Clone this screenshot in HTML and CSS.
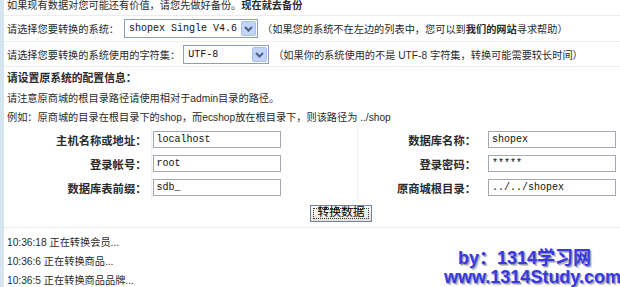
FILE: index.html
```html
<!DOCTYPE html>
<html lang="zh-CN">
<head>
<meta charset="utf-8">
<title>数据转换</title>
<link rel="stylesheet" href="styles.css">
</head>
<body>
<div class="page">
  <div class="row row-top">如果现有数据对您可能还有价值，请您先做好备份。<b>现在就去备份</b></div>
  <div class="row">
    <span>请选择您要转换的系统：</span>
    <span class="select sel-system"><span class="sel-text">shopex Single V4.6</span><span class="sel-btn"><svg width="15" height="15" viewBox="0 0 15 15"><rect x="0.5" y="0.5" width="14" height="14" rx="1.5" fill="#c3d4fa" stroke="#a9bff0"/><path d="M4 6 L7.5 9.5 L11 6" fill="none" stroke="#4d6185" stroke-width="2"/></svg></span></span>
    <span class="note">（如果您的系统不在左边的列表中，您可以到<b>我们的网站</b>寻求帮助）</span>
  </div>
  <div class="row row-3">
    <span>请选择您要转换的系统使用的字符集：</span>
    <span class="select sel-charset"><span class="sel-text">UTF-8</span><span class="sel-btn"><svg width="15" height="15" viewBox="0 0 15 15"><rect x="0.5" y="0.5" width="14" height="14" rx="1.5" fill="#c3d4fa" stroke="#a9bff0"/><path d="M4 6 L7.5 9.5 L11 6" fill="none" stroke="#4d6185" stroke-width="2"/></svg></span></span>
    <span class="note">（如果你的系统使用的不是 UTF-8 字符集，转换可能需要较长时间）</span>
  </div>
  <div class="section">
    <div class="line heading">请设置原系统的配置信息：</div>
    <div class="line">请注意原商城的根目录路径请使用相对于admin目录的路径。</div>
    <div class="line">例如：原商城的目录在根目录下的shop，而ecshop放在根目录下，则该路径为 ../shop</div>
    <table class="form">
      <tr>
        <td class="lbl lbl-1">主机名称或地址：</td>
        <td class="fld fld-1"><span class="input">localhost</span></td>
        <td class="lbl lbl-2">数据库名称：</td>
        <td class="fld fld-2"><span class="input">shopex</span></td>
      </tr>
      <tr>
        <td class="lbl lbl-1">登录帐号：</td>
        <td class="fld fld-1"><span class="input">root</span></td>
        <td class="lbl lbl-2">登录密码：</td>
        <td class="fld fld-2"><span class="input">*****</span></td>
      </tr>
      <tr>
        <td class="lbl lbl-1">数据库表前缀：</td>
        <td class="fld fld-1"><span class="input">sdb_</span></td>
        <td class="lbl lbl-2">原商城根目录：</td>
        <td class="fld fld-2"><span class="input">../../shopex</span></td>
      </tr>
    </table>
    <div class="actions"><span class="button"><span class="button-inner">转换数据</span></span></div>
  </div>
  <div class="log">
    <div class="log-line">10:36:18 正在转换会员...</div>
    <div class="log-line">10:36:6 正在转换商品...</div>
    <div class="log-line">10:36:5 正在转换商品品牌...</div>
  </div>
  <div class="watermark">
    <div class="wm-1">by：1314学习网</div>
    <div class="wm-2">www.1314Study.com</div>
  </div>
</div>
</body>
</html>
```
FILE: styles.css
```css
html, body {
  margin: 0;
  padding: 0;
  background: #fff;
  overflow: hidden;
}
body {
  font-family: "Liberation Sans", "Noto Sans CJK SC", sans-serif;
  font-size: 10.2px;
  color: #2a2a2a;
}
.page {
  position: relative;
  height: 300px;
  margin-top: -6px;
  border-left: 4px solid #d5e5ef;
}
.row {
  display: flex;
  align-items: center;
  height: 25px;
  padding-left: 3px;
  border-bottom: 1px solid #ececec;
  white-space: nowrap;
}
.row-top { height: 21px; }
.row-3 { height: 24px; }
.select {
  display: inline-flex;
  align-items: center;
  justify-content: space-between;
  box-sizing: border-box;
  height: 19px;
  border: 1px solid #8a9fbb;
  background: #fff;
  margin: 0 4px 0 5px;
  padding: 0 1px 0 4px;
}
.sel-system { width: 134px; }
.sel-charset { width: 86px; margin-left: 3px; }
.sel-text {
  font-family: "Liberation Mono", monospace;
  font-size: 10px;
  color: #111;
}
.sel-btn { display: flex; }
.section {
  padding: 2px 0 0 3px;
}
.line {
  line-height: 19.5px;
  white-space: nowrap;
}
.heading { font-weight: bold; font-size: 10.8px; }
.form {
  border-collapse: collapse;
  margin-left: -3px;
}
.form td {
  height: 24px;
  padding: 0;
  vertical-align: middle;
  white-space: nowrap;
}
.lbl {
  font-weight: bold;
  font-size: 11.3px;
  text-align: right;
  padding-right: 4px !important;
  box-sizing: border-box;
}
.lbl-1 { width: 147px; }
.lbl-2 { width: 123px; border-left: 1px solid #f0f0f0; }
.fld-1 { width: 206px; border-left: 1px solid #f0f0f0; padding-left: 1px !important; box-sizing: border-box; }
.fld-2 { padding-left: 8px !important; }
.input {
  display: flex;
  align-items: center;
  box-sizing: border-box;
  width: 128px;
  height: 17px;
  border: 1px solid #a3a9b2;
  padding-left: 3px;
  font-family: "Liberation Mono", monospace;
  font-size: 10px;
  color: #111;
  background: #fff;
}
.actions {
  height: 28px;
  padding-left: 306px;
  padding-top: 5px;
  box-sizing: border-box;
  border-bottom: 1px solid #ececec;
  margin-left: -3px;
}
.button {
  display: inline-flex;
  box-sizing: border-box;
  width: 62px;
  height: 17px;
  border: 1px solid #6f84a3;
  background: linear-gradient(#fbfbf9, #e4e2da);
  padding: 2px;
}
.button-inner {
  flex: 1;
  display: flex;
  align-items: center;
  justify-content: center;
  border: 1px dotted #333;
  font-size: 11.8px;
  color: #000;
  line-height: 1;
}
.log {
  padding: 5px 0 0 3px;
}
.log-line {
  line-height: 19px;
}
.watermark {
  position: absolute;
  left: 440px;
  top: 255px;
  font-family: "Liberation Sans", "Noto Sans CJK SC", sans-serif;
  font-weight: bold;
  font-size: 18px;
  line-height: 19px;
  color: #3838e6;
  text-shadow: 1px 1px 0 #9a9aa8, 2px 2px 1px #c4c4cc;
  white-space: nowrap;
}
.wm-1 { padding-left: 14px; }
```
